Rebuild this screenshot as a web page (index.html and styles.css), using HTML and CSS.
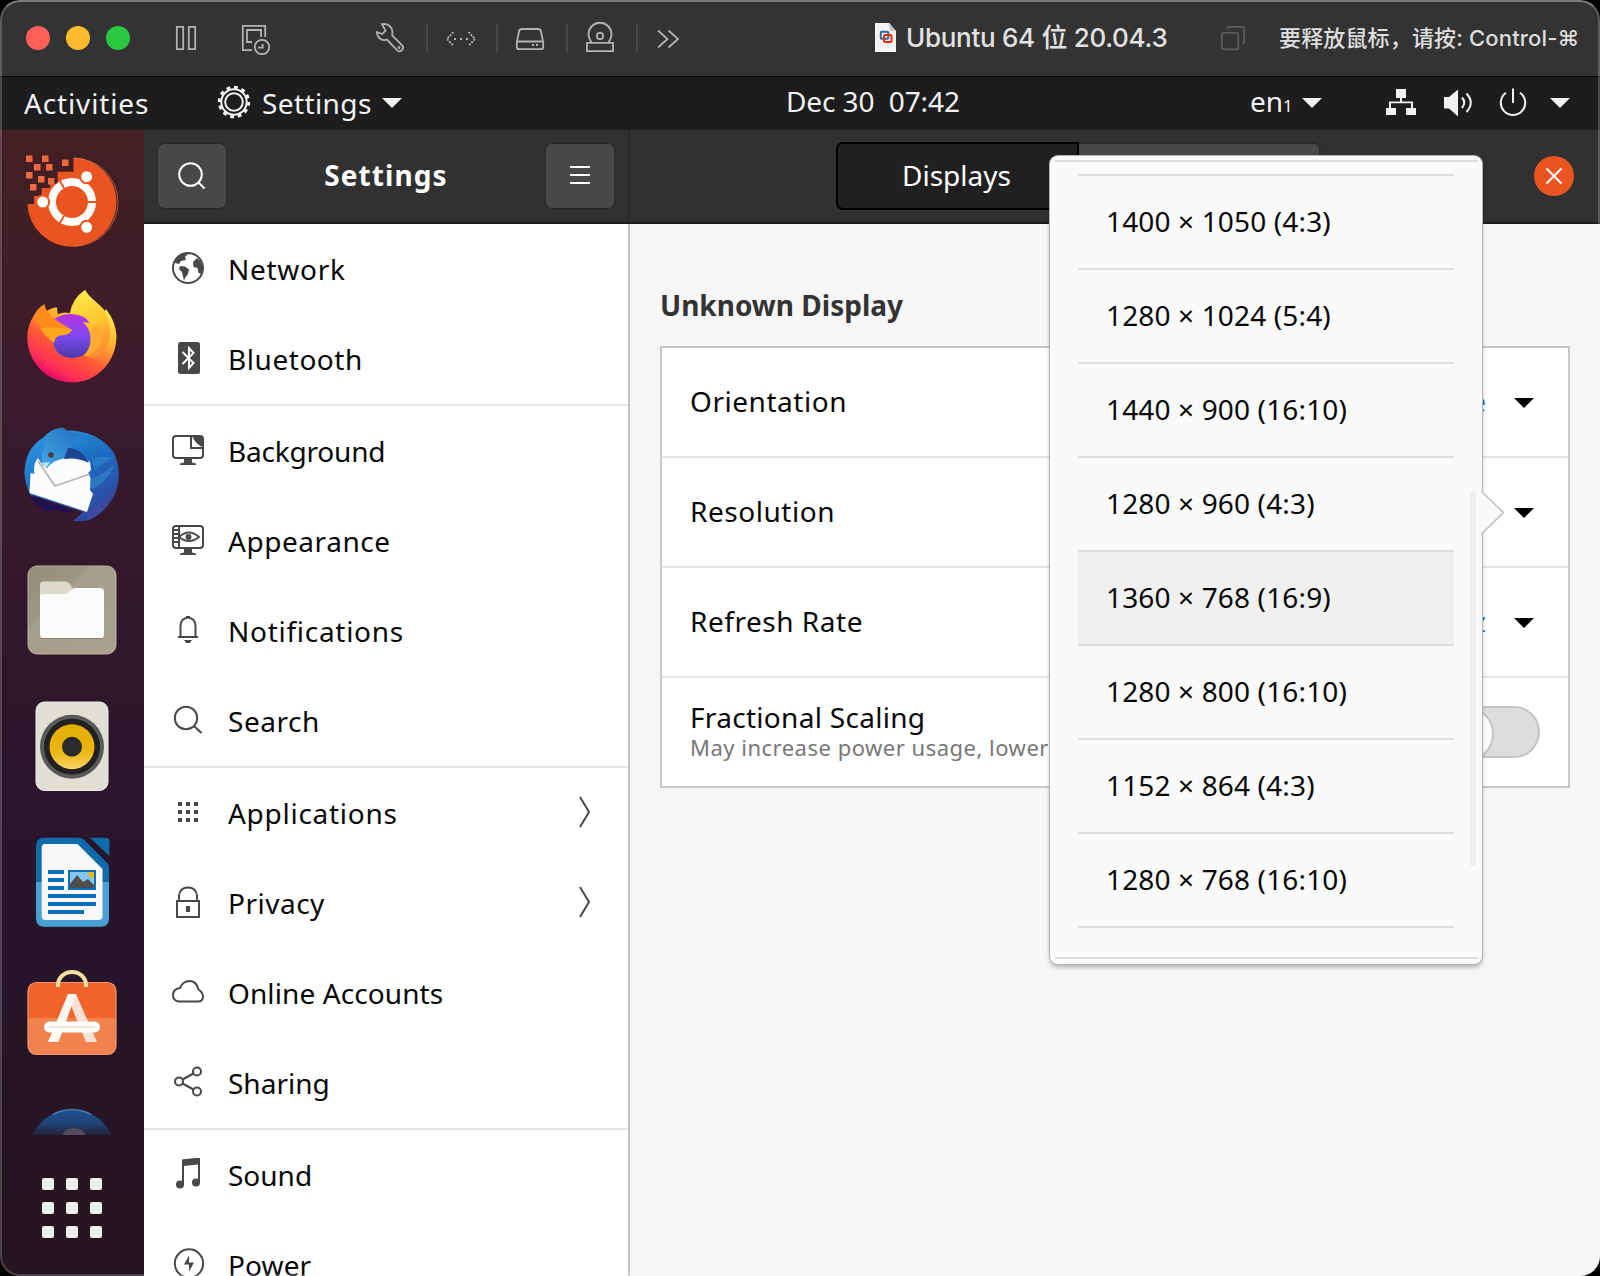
FILE: index.html
```html
<!DOCTYPE html>
<html lang="en">
<head>
<meta charset="utf-8">
<title>Ubuntu 64 位 20.04.3</title>
<link rel="stylesheet" href="styles.css">
</head>
<body>
<div class="window">
  <header class="titlebar">
    <div class="lights"><i class="light red"></i><i class="light yellow"></i><i class="light green"></i></div>
    <svg class="tool pause" viewBox="174 24 24 28"><path d="M176.800 26.800h6.400v22.400h-6.400zM188.800 26.800h6.400v22.400h-6.400z"/></svg>
    <svg class="tool snapshot" viewBox="240 22 32 32"><path d="M252 49.200h-9.200V24.800h22.400V36M252 41h-5V29h14v7"/><circle cx="262" cy="46" r="7.200"/><path d="M262.600 43v3.600h-4.600"/></svg>
    <div class="devices">
      <svg class="cell first" viewBox="356 0 72 76"><path d="M382 24.200c5-1 10 2 10.400 7.600 0 1.400 0 2.600-.2 3.600L402.400 45.600c2.400 2.800-1.800 7.400-5 5L387 39.600c-4.800 1.600-10-1.600-10.200-7.600l5.400 2 3.400-3.400z"/><circle cx="399" cy="47.500" r=".6"/></svg>
      <svg class="cell" viewBox="428 0 70 76"><path stroke-dasharray="2 1.200" d="M453.500 32l-6.500 7 6.500 7M468.500 32l6.500 7-6.500 7"/><path d="M454 39h2M460 39h2M466 39h2"/></svg>
      <svg class="cell" viewBox="498 0 70 76"><path d="M522 29h16q2.500 0 3 2.500l2.200 11v4.500q0 2.200-2.200 2.200h-22q-2.200 0-2.200-2.200v-4.500l2.200-11q.5-2.500 3-2.500zM517 41.500h26M532 45h2M536 45h2"/></svg>
      <svg class="cell" viewBox="568 0 70 76"><path d="M587 42.800h26v8.400h-26zM591.500 42a11.500 11.500 0 1 1 17 0"/><circle cx="600" cy="36" r="3.200"/></svg>
      <svg class="cell last" viewBox="638 0 60 76"><path d="M658 30.500l9.500 8.500-9.500 8.500M668.500 30.500l9.500 8.500-9.500 8.500"/></svg>
    </div>
    <div class="doc-title">
      <svg class="doc" viewBox="0 0 24 31"><path d="M1 1h14l7 8v21H1z" fill="#f4f4f4"/><path d="M15 1l7 8h-6z" fill="#c4c4c4"/><rect x="6.800" y="9.800" width="7.500" height="7" rx="1" fill="none" stroke="#1a6fb0" stroke-width="2"/><rect x="10" y="13" width="7.500" height="7" rx="1" fill="none" stroke="#f6260f" stroke-width="2"/></svg>
      <span>Ubuntu 64 位 20.04.3</span>
    </div>
    <svg class="tool copy" viewBox="1220 25 26 26"><rect x="1221.800" y="32.800" width="16.500" height="16.500" rx="2"/><path d="M1227.500 29.500v-1q0-1.700 1.700-1.700h13q2 0 2 2v12.500q0 1.700-2 1.700"/></svg>
    <span class="hint">要释放鼠标，请按: Control-⌘</span>
  </header>

  <nav class="topbar">
    <span class="activities">Activities</span>
    <svg class="gear" viewBox="-17 -17 34 34"><circle r="12.700"/><circle r="8.800"/><circle class="teeth" r="14.700" pathLength="120"/></svg>
    <span class="appname">Settings</span>
    <svg class="caret" viewBox="0 0 20 10"><path d="M0 0h20L10 10z"/></svg>
    <span class="clock">Dec 30&nbsp; 07:42</span>
    <span class="lang">en<small>1</small></span>
    <svg class="caret" viewBox="0 0 20 10"><path d="M0 0h20L10 10z"/></svg>
    <svg class="status wired" viewBox="1385 86 32 30"><path d="M1396 88h10v9h-4v3.500h11v6.500h3v7h-10v-7h5v-4.700h-20v4.700h5v7h-10v-7h3v-6.500h11V97h-4z"/></svg>
    <svg class="status volume" viewBox="1442 86 34 30"><path d="M1444 96h5l9-7.500v27l-9-8h-5z"/><path class="ln" d="M1462 96.500q4.500 5 0 10.500M1466.500 92.500q8.500 9 0 18.500"/></svg>
    <svg class="status power" viewBox="1498 86 30 30"><path class="ln" d="M1506 91.700a12.200 12.200 0 1 0 14 0M1513 87.500v14.500"/></svg>
    <svg class="caret" viewBox="0 0 20 10"><path d="M0 0h20L10 10z"/></svg>
  </nav>

  <div class="desktop">
    <aside class="dock">
      <div class="apps">
        <svg viewBox="0 0 96 96"><path d="M49.500 3.500A44.600 44.600 0 1 1 3.400 50H10V42h7.700v-8H26v-4.300h7.700v-12h15.800z" fill="#e95420"/><path d="M50 4.200a44 44 0 0 1 0 88" fill="none" stroke="#f28a62" stroke-opacity=".55"/><path fill="#ef6a3c" d="M2 1.500h6.500V8H2zM18 1.500h6.500V8H18zM10 10h6.500v6.500H10zM22 10h6.500v6.500H22zM38 5.500h6.500V12H38zM2 18h6.500v6.500H2zM14 22h6.500v6.500H14zM24 24h6.500v6.500H24zM6 30h6.500v6.500H6z"/><circle cx="48" cy="48" r="20" fill="none" stroke="#fff" stroke-width="8"/><path d="M64 48h10M40 34.100l-5-8.600M40 61.900l-5 8.600" stroke="#e95420" stroke-width="2"/><g fill="#fff" stroke="#e95420" stroke-width="2"><circle cx="18.700" cy="48" r="6.500"/><circle cx="62.700" cy="22.700" r="6.500"/><circle cx="62.700" cy="73.300" r="6.500"/></g></svg>
        <svg viewBox="0 0 96 96"><defs><linearGradient id="ff" x1=".8" y1=".1" x2=".3" y2="1"><stop offset="0" stop-color="#fff44f"/><stop offset=".35" stop-color="#ffb52e"/><stop offset=".62" stop-color="#ff5a38"/><stop offset=".85" stop-color="#ff2f55"/><stop offset="1" stop-color="#e00070"/></linearGradient><linearGradient id="fp" x1="0" y1="0" x2="0" y2="1"><stop offset="0" stop-color="#b833e1"/><stop offset=".5" stop-color="#7f4af0"/><stop offset="1" stop-color="#4a3aa8"/></linearGradient><linearGradient id="fy" x1="0" y1="0" x2=".3" y2="1"><stop offset="0" stop-color="#fff04a"/><stop offset=".6" stop-color="#ffc431"/><stop offset="1" stop-color="#ff9030"/></linearGradient></defs><path d="M61 0c4 8 14 13 20 21l1-2q10 13 10.500 27c0 26-20 46.500-44.500 46.500S3.300 73 3.300 47q0-11 6-20.500Q13 19 20.300 14.300l1.500 7.500q5-4 11-4.500l1 7q6-3 12-1Q48 9 61 0z" fill="url(#ff)"/><path d="M61 0c4 8 14 13 20 22q13 28-7 44-8 5-13-1 10-12 7-22-9-14-21.500-19.500Q48 9 61 0z" fill="url(#fy)"/><path d="M30 29q8-5 18-5 14 1 17.500 9l-7-1q8 6 8 17 0 18.500-18.500 19-18-1-19-18-1-14 1-21z" fill="url(#fp)"/><path d="M9 28Q13 19 20.300 14.300q2 9 12 16 8 5 15.500 9.500-2 5-9 5.200-8 0-9 7.500-5-3-8-9-4-6-12.800-15.500z" fill="#ff8c1a"/><path d="M16 38q14-2 32 1.800-2 5-9 5.200-8 0-9 7.500Q21 47 16 38z" fill="#ffa61f"/><path d="M67 40q3 14-7 26 10-2 15-9 6-11-1-22-4 1-7 5z" fill="#ffab33"/></svg>
        <svg viewBox="0 -1 96 96"><defs><linearGradient id="tb" x1=".2" y1="0" x2=".8" y2="1"><stop offset="0" stop-color="#2e98e0"/><stop offset=".45" stop-color="#1c6fc4"/><stop offset="1" stop-color="#31409a"/></linearGradient><linearGradient id="th" x1="1" y1="0" x2="0" y2="1"><stop offset="0" stop-color="#2368bd"/><stop offset="1" stop-color="#3fa9e6"/></linearGradient></defs><path d="M34 1.500q6-2 8 2Q74 3 90 26q9 20 1 41-9 18-24 25-8 3-18 2l10-9L8 68l15 17Q3 72 .5 48 0 22 20 10q6-7 14-8.500z" fill="url(#tb)"/><path d="M5 68l45 16-10 2q-10-6-17-1Q10 78 5 68z" fill="#21104e"/><path d="M14 31l5 8 20-9q18-2 27 5l1 8-3 3 3 6-1 11 3 4-6 18L5.500 66l1-20 4 1q-2-9 3.500-16z" fill="#fcfcfc"/><path d="M14 34l17 25 35-12" fill="none" stroke="#b4b4b4" stroke-width="1.600"/><path d="M34 1.500q6-2 8 2l14 4q-8 6-10 14 12 3 18 14-12-8-24-4-12 2-17 10l-5-5q-1-9 2-17 4-14 14-18z" fill="url(#th)"/><path d="M44 21q14 0 21 15-11-6-25-4z" fill="#1d4590"/><path d="M17 36l5 5 4-6z" fill="#b9e2f5"/><circle cx="27" cy="28" r="2.800" fill="#543a2c"/><path d="M68 32q14-4 22-1-10 3-19 12zM66 52q12-3 25-15-8 20-25 25z" fill="#2d83c8" opacity=".7"/><path d="M64 84q15-7 25-22-4 22-26 32z" fill="#3e4aa2"/></svg>
        <svg viewBox="0 0 96 96"><defs><linearGradient id="fg" x1="0" y1="0" x2="1" y2="1"><stop offset="0" stop-color="#948b78"/><stop offset=".35" stop-color="#9f9683"/><stop offset=".36" stop-color="#a69d8b"/><stop offset="1" stop-color="#aaa191"/></linearGradient></defs><rect x="4" y="4" width="88" height="88" rx="9" fill="url(#fg)" stroke="#b9b1a0" stroke-width="1"/><path d="M16 66V23q0-3.500 3.500-3.500h22q4 0 6.500 6.500v6H18z" fill="#dcd9cd"/><path d="M16 34q0-2 3-2h20q5 0 7-3 2-3 5-3h25q4 0 4 4v42q0 4.500-4 4.500H20q-4 0-4-4z" fill="#fbfbf9"/><path d="M17 76.500h61" stroke="#8a8271"/></svg>
        <svg viewBox="0 0 96 96"><defs><linearGradient id="ry" x1="0" y1="0" x2="0" y2="1"><stop offset="0" stop-color="#e3ac08"/><stop offset=".6" stop-color="#eab60f"/><stop offset="1" stop-color="#f8d366"/></linearGradient></defs><rect x="12" y="4" width="72" height="88.500" rx="8.500" fill="#e2dfd4" stroke="#eeece3" stroke-width="1"/><circle cx="48" cy="48.700" r="32" fill="#5a5a5a"/><circle cx="48" cy="48.700" r="28" fill="#212121"/><circle cx="48" cy="48.700" r="22.500" fill="url(#ry)"/><circle cx="48" cy="48.700" r="10" fill="#2a2a2a"/></svg>
        <svg viewBox="0 0 96 96"><defs><linearGradient id="wr" x1="0" y1="0" x2="0" y2="1"><stop offset=".5" stop-color="#0f6ca8"/><stop offset=".5" stop-color="#48a0d4"/></linearGradient></defs><path d="M20 3.700h35q3 0 5 2l23 23q2 2 2 5V84q0 8.700-8.500 8.700h-56q-8.500 0-8.500-8.700V12q0-8.300 8-8.300z" fill="url(#wr)"/><path d="M66 3.700h16q3.300 0 3.300 3.300v15z" fill="#0f6ca8"/><path d="M21 10h32.500l25 25v47q0 4-4 4H21.700q-4 0-4-4V13.500Q17.700 10 21 10z" fill="#f8f8f8"/><path d="M24 36h16v4H24zM24 44h16v4H24zM24 52h16v4H24zM24 60h48v4H24zM24 68h48v4H24zM24 76h36v4H24zM44 36h28v20H44z" fill="#0d70b4"/><path d="M46 38h24v16H46z" fill="#83c6f0"/><path d="M64 38h6v6q-6 0-6-6z" fill="#f0b41c"/><path d="M46 54v-4l7-9 6 7 5-3 6 6v3z" fill="#4d4d4d"/></svg>
        <svg viewBox="0 0 96 96"><defs><linearGradient id="sw" x1="0" y1="0" x2="0" y2="1"><stop offset=".5" stop-color="#f2632a"/><stop offset=".5" stop-color="#f1814d"/></linearGradient></defs><rect x="4" y="12.500" width="88" height="72" rx="8.500" fill="url(#sw)" stroke="#f59872" stroke-width="1.200"/><path d="M34 17v-2a14 13 0 0 1 28 0v2" fill="none" stroke="#f5e0a4" stroke-width="4"/><path d="M44 24h8l21 48H62L48 38z" fill="#fbe0d6"/><path d="M44 24h8L34.500 72H24z" fill="#fffaf4"/><rect x="20" y="51.500" width="56" height="11" rx="5.500" fill="#fff"/><path d="M25 57h46" stroke="#fad9cc" stroke-width="1.500"/></svg>
        <svg viewBox="0 0 96 96"><defs><linearGradient id="hp" x1="0" y1="3" x2="0" y2="31" gradientUnits="userSpaceOnUse"><stop offset="0" stop-color="#1d5293"/><stop offset=".5" stop-color="#204477"/><stop offset="1" stop-color="#251b31"/></linearGradient></defs><circle cx="48" cy="47" r="43.500" fill="url(#hp)"/><path d="M29 8.500q19-10 38 0" fill="none" stroke="#4a79ad" stroke-width="1.500"/><path d="M38 30q2-8 12-8 9 0 12 8z" fill="#534a5a"/></svg>
      </div>
      <div class="launcher"><i></i><i></i><i></i><i></i><i></i><i></i><i></i><i></i><i></i></div>
    </aside>

    <section class="sidebar">
      <div class="headerbar">
        <button class="hbtn"><svg viewBox="0 0 32 32"><circle cx="14.500" cy="14.500" r="11.300"/><path d="M22.500 22.500l6 6"/></svg></button>
        <h1>Settings</h1>
        <button class="hbtn"><svg viewBox="0 0 32 32"><path d="M6 7h20M6 15h20M6 23h20"/></svg></button>
      </div>
      <ul class="panels">
        <li class="sp-75"><svg viewBox="0 0 32 32"><circle cx="16" cy="16" r="15"/><path class="f" d="M4 7Q9 1 16 2l-3 3 1 3-5 1-2 3-4-1zM8 14l5 .5 4 3-1 4.500-3 4-1 3-2-9-3-3zM21 10l4-4q6 4 5.500 12l-1 4-3-1-1-5-4-1z"/></svg><span>Network</span></li>
        <li class="sp-55"><svg viewBox="0 0 32 32"><rect class="f" x="6" y="0" width="22" height="32" rx="2.500"/><path class="w" d="M10.500 10l11 11-4.500 5V6l4.500 5-11 11"/></svg><span>Bluetooth</span></li>
        <li class="group sp-neg"><svg viewBox="0 0 32 32"><rect x="1" y="2" width="30" height="22" rx="3"/><path class="f" d="M8 31v-1.500l4-1V24h8v4.500l4 1V31zM20 2h8q3 0 3 3v8q-7-2-11-11z"/><path d="M19 2v12h12"/></svg><span>Background</span></li>
        <li class="sp-55"><svg viewBox="0 0 32 32"><rect x="1" y="2" width="30" height="22" rx="3"/><path class="f" d="M8 31v-1.500l4-1V24h8v4.500l4 1V31z"/><path d="M7 2v22M1 6h6M1 10h6M1 14h6M1 18h6M7 13Q17 4 27 13 17 21 7 13z"/><circle class="f" cx="16.500" cy="13" r="3"/></svg><span>Appearance</span></li>
        <li class="sp-75"><svg viewBox="0 0 32 32"><path d="M6 23h20M8.500 23V12q0-7.500 7.500-8.500Q23.500 4.500 23.500 12v11M14 3h4"/><path class="f" d="M12 26h8l-2 3h-4z"/></svg><span>Notifications</span></li>
        <li class="sp-55"><svg viewBox="0 0 32 32"><circle cx="14" cy="14" r="11.200"/><path d="M22 22l7.500 7"/></svg><span>Search</span></li>
        <li class="group sp-75"><svg viewBox="0 0 32 32"><path class="f" d="M6 6h4v4H6zM14 6h4v4h-4zM22 6h4v4h-4zM6 14h4v4H6zM14 14h4v4h-4zM22 14h4v4h-4zM6 22h4v4H6zM14 22h4v4h-4zM22 22h4v4h-4z"/></svg><span>Applications</span><svg class="chev" viewBox="0 0 12 32"><path d="M1 1l9 15-9 15"/></svg></li>
        <li class="sp-50"><svg viewBox="0 0 32 32"><path d="M5 15h22v16H5zM7 15V9.500q1-8 9-8t9 8V15"/><path class="f" d="M14 20h4v6h-4z"/></svg><span>Privacy</span><svg class="chev" viewBox="0 0 12 32"><path d="M1 1l9 15-9 15"/></svg></li>
        <li class="sp-10"><svg viewBox="0 0 32 32"><path d="M7 25.500q-6-.5-6-6.500 0-6 7-7 3-7 9.500-7 7 0 9 8.500 4.500 3 4.500 7 0 5-5 5z"/></svg><span>Online Accounts</span></li>
        <li><svg viewBox="0 0 32 32"><circle cx="7" cy="15.500" r="4"/><circle cx="25" cy="5.500" r="4"/><circle cx="25" cy="25.500" r="4"/><path d="M10.500 13.500l11-6M10.500 17.500l11 6"/></svg><span>Sharing</span></li>
        <li class="group"><svg viewBox="0 0 32 32"><path class="f" d="M10 1.500l18-2v26h-2v-19L12 8v19.500h-2z"/><circle class="f" cx="8" cy="26.500" r="4"/><circle class="f" cx="24" cy="24.500" r="4"/></svg><span>Sound</span></li>
        <li class="sp-10"><svg viewBox="0 0 32 32"><circle cx="17" cy="15.500" r="14.200"/><path class="f" d="M17 7.500v7h5l-5 9v-7h-5z"/></svg><span>Power</span></li>
      </ul>
    </section>

    <main class="content">
      <div class="headerbar">
        <div class="tabs"><span class="tab on">Displays</span><span class="tab"></span></div>
        <svg class="close" viewBox="0 0 40 40"><circle cx="20" cy="20" r="20" fill="#e95420"/><path d="M12.500 12.500l15 15M27.500 12.500l-15 15" stroke="#fff" stroke-width="2.200"/></svg>
      </div>
      <div class="page">
        <h2>Unknown Display</h2>
        <div class="card">
          <div class="row"><span>Orientation</span><span class="val">Landscape</span><svg class="drop" viewBox="0 0 20 10"><path d="M0 0h20L10 10z"/></svg></div>
          <div class="row"><span>Resolution</span><svg class="drop" viewBox="0 0 20 10"><path d="M0 0h20L10 10z"/></svg></div>
          <div class="row"><span>Refresh Rate</span><span class="val">60.00 Hz</span><svg class="drop" viewBox="0 0 20 10"><path d="M0 0h20L10 10z"/></svg></div>
          <div class="row"><div class="labels"><p>Fractional Scaling</p><p class="sub">May increase power usage, lower</p></div><i class="switch"></i></div>
        </div>
      </div>
    </main>
  </div>

  <div class="popover">
    <svg class="tail" viewBox="0 0 24 44"><path d="M0 0l22.500 21.500L0 43.500" fill="#fafafa" stroke="#c8c8c8" stroke-width="1.800"/></svg>
    <i class="thumb"></i>
    <ul class="modes">
      <li>1400 × 1050 (4:3)</li>
      <li>1280 × 1024 (5:4)</li>
      <li>1440 × 900 (16:10)</li>
      <li>1280 × 960 (4:3)</li>
      <li class="current">1360 × 768 (16:9)</li>
      <li>1280 × 800 (16:10)</li>
      <li>1152 × 864 (4:3)</li>
      <li>1280 × 768 (16:10)</li>
    </ul>
  </div>
</div>
</body>
</html>
```
FILE: styles.css
```css
* { box-sizing: border-box; margin: 0; padding: 0; }
body { background: #000; width: 1600px; height: 1276px; overflow: hidden; font: 28px/36px "Noto Sans", "Open Sans", sans-serif; color: #080808; }
ul { list-style: none; }
svg { display: block; flex: none; }
button { border: 0; }
span, h1, h2, p { white-space: nowrap; }

.window { position: relative; width: 1600px; height: 1276px; border-radius: 20px; overflow: hidden; display: flex; flex-direction: column; background: #1d1d1d; }
.window::after { content: ""; position: absolute; inset: 0; border: 2px solid rgba(255, 255, 255, .2); border-top-color: #7c7c7c; border-radius: 20px; pointer-events: none; }

.titlebar { height: 77px; background: #333; border-bottom: 1px solid #000; display: flex; align-items: center; flex: none; padding-left: 26px; }
.lights { display: flex; gap: 16px; }
.light { width: 24px; height: 24px; border-radius: 50%; }
.red { background: #ff5f57; }
.yellow { background: #febc2e; }
.green { background: #28c840; }
.tool, .cell { fill: none; stroke: #b2b2b2; stroke-width: 1.8; }
.pause { width: 24px; height: 28px; margin-left: 44px; }
.snapshot { width: 32px; height: 32px; margin: 1px 0 0 42px; }
.devices { display: flex; align-items: center; margin-left: 84px; }
.cell { width: 70px; height: 76px; background: linear-gradient(#484848, #484848) right center / 2px 28px no-repeat; }
.cell.first { width: 72px; }
.cell.last { width: 60px; background: none; }
.doc-title { display: flex; align-items: center; gap: 8px; margin-left: 176px; width: 346px; font: 500 26px/34px Inter, "Noto Sans CJK SC", sans-serif; letter-spacing: -.3px; color: #e2e2e2; }
.doc { width: 24px; height: 31px; margin-top: -2px; }
.copy { width: 26px; height: 26px; stroke: #5c5c5c; }
.hint { margin-left: 33px; font: 500 22px/32px Inter, "Noto Sans CJK SC", "DejaVu Sans", sans-serif; letter-spacing: .15px; color: #dedede; }

.topbar { height: 53px; background: #1d1d1d; color: #f2f2f2; fill: #f2f2f2; display: flex; align-items: center; flex: none; padding-left: 24px; }
.topbar span { margin-top: -2px; }
.topbar .activities { width: 193px; letter-spacing: .85px; }
.gear { width: 34px; height: 34px; margin-top: -3px; fill: none; stroke: #f2f2f2; stroke-width: 2; }
.teeth { stroke-width: 3; stroke-dasharray: 5 5; }
.topbar .appname { width: 120px; margin-left: 11px; letter-spacing: .4px; }
.caret { width: 20px; height: 10px; margin-top: -2px; }
.topbar .clock { margin: -6px 0 0 384px; width: 464px; letter-spacing: -.1px; }
.topbar .lang { width: 52px; margin-top: 0; }
.lang small { font-size: 17px; }
.status { margin-top: -3px; }
.wired { width: 32px; height: 30px; margin-left: 63px; }
.volume { width: 34px; height: 30px; margin-left: 25px; }
.power { width: 30px; height: 30px; margin-left: 22px; }
.power + .caret { margin-left: 22px; }
.ln { fill: none; stroke: #f2f2f2; stroke-width: 2; }

.desktop { display: flex; height: 1146px; }
.dock { width: 144px; background: linear-gradient(#441f23, #3a1a2c 25%, #2e162b 50%, #26152a 72%, #24151f); display: flex; flex-direction: column; align-items: center; }
.apps { height: 1005px; padding-top: 24px; overflow: hidden; display: flex; flex-direction: column; gap: 40px; }
.apps svg { width: 96px; height: 96px; }
.launcher { display: grid; grid-template-columns: repeat(3, 12px); grid-auto-rows: 12px; gap: 12px; margin-top: 43px; }
.launcher i { background: #ededeb; border-radius: 2px; }

.headerbar { height: 94px; background: #313131; border-bottom: 2px solid #1c1c1c; display: flex; align-items: center; color: #fff; }
.sidebar { width: 486px; background: #fff; border-right: 2px solid #c4c4c4; display: flex; flex-direction: column; }
.sidebar .headerbar { width: 486px; flex: none; padding: 0 14px; justify-content: space-between; border-right: 2px solid #292929; }
.hbtn { width: 68px; height: 64px; border-radius: 6px; background: #4a4748; display: grid; place-items: center; box-shadow: 0 0 0 1px #2a2828; }
.hbtn svg { width: 32px; height: 32px; fill: none; stroke: #fff; stroke-width: 2; }
h1 { font-size: 28px; line-height: 36px; letter-spacing: 1.1px; margin-top: -2px; }
.panels li { height: 90px; display: flex; align-items: center; padding-left: 28px; }
.panels .group { height: 92px; border-top: 2px solid #e4e4e4; }
.panels svg { width: 32px; height: 32px; fill: none; stroke: #484848; stroke-width: 2; margin-top: -2px; }
.panels span { margin-left: 24px; flex: 1; }
.panels .f { fill: #484848; stroke: none; }
.panels .w { stroke: #fff; }
.panels .chev { width: 12px; margin-right: 37px; }
.sp-75 { letter-spacing: .72px; }
.sp-55 { letter-spacing: .55px; }
.sp-50 { letter-spacing: .5px; }
.sp-10 { letter-spacing: .1px; }
.sp-neg { letter-spacing: -.2px; }

.content { flex: 1; background: #f6f6f6; }
.content .headerbar { padding: 0 26px 0 206px; justify-content: space-between; }
.tabs { display: flex; width: 485px; height: 68px; border-radius: 7px; background: #4a4748; box-shadow: inset 0 0 0 2px #2a2828; }
.tab.on { width: 243px; border: 2px solid #000; border-radius: 7px 0 0 7px; background: #202020; display: flex; align-items: center; justify-content: center; padding: 0 2px 2px 0; }
.close { width: 40px; height: 40px; }
.page { padding: 62px 30px 0; }
h2 { font-size: 28px; line-height: 38px; color: #333; }
.card { margin-top: 22px; border: 2px solid #c8c8c8; background: #fff; letter-spacing: .53px; }
.row { height: 110px; display: flex; align-items: center; justify-content: space-between; padding: 0 34px 0 28px; border-bottom: 2px solid #e4e4e4; }
.row > span { margin-top: -2px; }
.row:last-child { height: 108px; border: 0; padding-right: 28px; }
.drop { width: 20px; height: 10px; margin-top: 2px; fill: #000; }
.row > .val { color: #1577c9; margin-left: auto; margin-right: 28px; letter-spacing: 0; }
.labels { margin-top: -4px; }
.row p { line-height: 34px; letter-spacing: .3px; }
.row .sub { font-size: 22px; line-height: 26px; letter-spacing: .5px; color: #777; }
.switch { flex: none; width: 102px; height: 52px; border-radius: 26px; border: 2px solid #c4c4c4; background: #dedede; }
.switch::before { content: ""; display: block; width: 52px; height: 52px; margin: -2px; border: 2px solid #c4c4c4; border-radius: 50%; background: #fff; }

.popover { position: absolute; left: 1050px; top: 156px; width: 432px; height: 808px; border-radius: 8px; background: #fafafa; box-shadow: 0 0 0 1px #b4b4b4, 0 3px 5px rgba(0, 0, 0, .3); padding: 4px 4px 4px 5px; }
.modes { height: 799px; border-top: 2px solid #dedede; border-bottom: 2px solid #dedede; padding: 12px 24px 0 23px; }
.modes li { height: 94px; border-top: 2px solid #dedede; padding: 0 0 2px 28px; display: flex; align-items: center; white-space: nowrap; letter-spacing: .15px; }
.modes li:last-child { height: 96px; border-bottom: 2px solid #dedede; }
.modes .current { background: #f0f0f0; }
.tail { position: absolute; left: 431px; top: 335px; width: 24px; height: 44px; }
.thumb { position: absolute; left: 420px; top: 336px; width: 6px; height: 374px; background: #efefef; }
```
